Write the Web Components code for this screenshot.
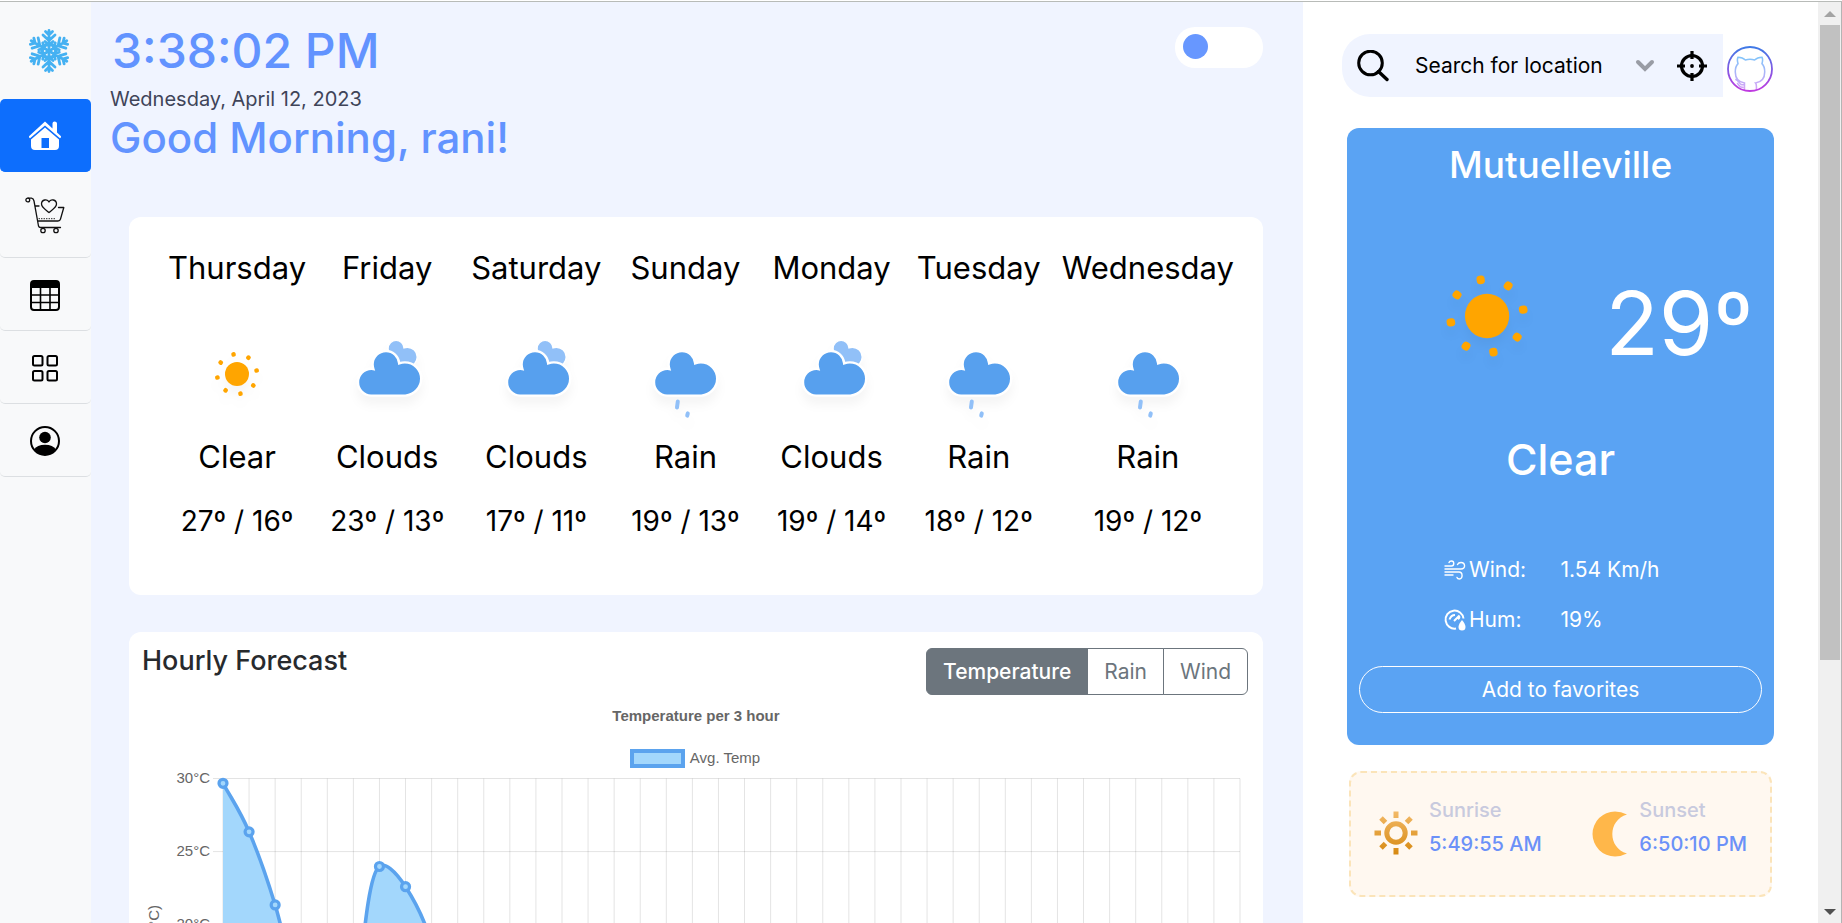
<!DOCTYPE html>
<html lang="en">
<head>
<meta charset="utf-8">
<title>Weather dashboard</title>
<style>
  body { margin: 0; background: #fff; font-family: Inter, "Open Sans", sans-serif; font-size: 20px; color: #000; }
</style>
</head>
<body>
<weather-app></weather-app>

<script>
function define(name, render) {
  customElements.define(name, class extends HTMLElement {
    connectedCallback() {
      if (this.shadowRoot) return;
      const t = document.createElement('template');
      t.innerHTML = render(this);
      this.attachShadow({ mode: 'open' }).append(t.content.cloneNode(true));
    }
  });
}

/* ---------- weather icons ---------- */
const CLOUD = 'M47.7,35.4c0-4.6-3.7-8.2-8.2-8.2c-1,0-1.9,0.2-2.8,0.5c-0.3-3.4-3.1-6.2-6.6-6.2c-3.7,0-6.7,3-6.7,6.7c0,0.8,0.2,1.6,0.4,2.3c-0.3-0.1-0.7-0.1-1-0.1c-3.7,0-6.7,3-6.7,6.7c0,3.6,2.9,6.6,6.5,6.7l17.2,0C44.2,43.3,47.7,39.8,47.7,35.4z';
const sunRays = [-10, 35, 80, 125, 170, 215, 260, 305]
  .map(a => `<rect x="-1.1" y="-11.1" width="2.2" height="2.3" rx="0.9" transform="rotate(${a})"/>`).join('');
const cloudPath = (fill, tr) => `<path d="${CLOUD}" fill="${fill}" stroke="#fff" stroke-width="1.2" transform="${tr}"/>`;
const WEATHER = {
  clear: `<g transform="translate(32,32)" fill="orange"><circle r="6"/>${sunRays}</g>`,
  clouds: cloudPath('#91C0F8', 'translate(18.5,2.3) scale(0.6)') + cloudPath('#57A0EE', 'translate(1.4,-1)'),
  rain: `<g stroke="#91C0F8" stroke-width="2" stroke-linecap="round"><path d="M28.4 45.7L28 48.7M33.4 51.7L33.1 52.8"/></g>` + cloudPath('#57A0EE', 'translate(.4,-1)')
};
define('weather-icon', el => `
  <style>
    :host { display: block; width: 128px; height: 128px; }
    :host([large]) { width: 242px; height: 242px; }
    svg { display: block; width: 100%; height: 100%; filter: drop-shadow(0 8px 5px rgba(0,0,0,.04)); }
  </style>
  <svg viewBox="0 0 64 64" aria-hidden="true">${WEATHER[el.getAttribute('kind')]}</svg>`);

/* ---------- interface icons ---------- */
const snowArms = [0, 60, 120, 180, 240, 300].map(a =>
  `<path transform="rotate(${a})" d="M0 0V-20.500M-3.500 -19.500L0 -16L3.500 -19.500M-6 -16L0 -10.500L6 -16M-4 -9.500L0 -6L4 -9.500M-3.500 -6L3.500 -6"/>`).join('');
const catPath = 'M-6 22V13C-12 12-16 8-16 1C-16-3-15-6-13-8C-14-11-14-13-13-15C-10-15-7-14-5-12C-2-13 2-13 5-12C7-14 10-15 13-15C14-13 14-11 13-8C15-6 16-3 16 1C16 8 12 12 6 13C7 14 7 15 7 17V22M-16 9C-12 10-12 14-9 15H-6M-14 13C-12 15-12 18-7 18';
const ICONS = {
  snow: [40, 46, `<g transform="translate(20,23)" fill="none" stroke="#45b1f2" stroke-width="2.8" stroke-linecap="round">${snowArms}</g>`],
  home: [34, 32, `<path fill="#fff" d="M17 1.500L24.500 8.500V3.500Q24.500 1.500 26.500 1.500Q29 1.500 29 3.500V12.500L33 16.200Q33.300 17.500 32 18.300L17 5.500L2 18.300Q.7 17.500 1 16.200Z"/><path fill="#fff" fill-rule="evenodd" d="M17 7.500L31 19.500V26Q31 30 27 30H7Q3 30 3 26V19.500ZM13.500 18V28H21V18Z"/>`],
  cart: [40, 37, `<g fill="none" stroke="#111" stroke-width="1.300" stroke-linecap="round" stroke-linejoin="round"><circle cx="2.800" cy="3" r="1.900"/><path d="M3 1.200H6.500Q8.500 1.500 9 4L13.500 29Q14 30.500 15.500 30.500H35.500M14 9H10M33.500 10.500H38.800L35.500 22Q35 24 33 24H13M24 15.500C21 13 16.500 10.500 16.500 7C16.500 2.500 22.500 1.500 24 5C25.500 1.500 31.500 2.500 31.500 7C31.500 10.500 27 13 24 15.500Z"/><circle cx="18" cy="33.500" r="2.200"/><circle cx="31" cy="33.500" r="2.200"/><path d="M14 21.700H31" stroke-width="1" stroke-dasharray=".5 2"/></g>`],
  table: [30, 31, `<rect x="1" y="1" width="28" height="29" rx="3" fill="none" stroke="#000" stroke-width="2"/><path d="M1 8V3Q1 1 3 1H27Q29 1 29 3V8Z"/><path stroke="#000" stroke-width="1.600" d="M1 15H29M1 22.500H29M10.500 7V30M20 7V30"/>`],
  grid: [26, 27, `<g fill="none" stroke="#000" stroke-width="2"><rect x="1" y="1" width="9.500" height="9.500" rx="1.500"/><rect x="15.500" y="1" width="9.500" height="9.500" rx="1.500"/><rect x="1" y="16" width="9.500" height="9.500" rx="1.500"/><rect x="15.500" y="16" width="9.500" height="9.500" rx="1.500"/></g>`],
  person: [30, 30, `<circle cx="15" cy="15" r="14" fill="none" stroke="#000" stroke-width="2"/><circle cx="15" cy="11.500" r="5.800"/><path d="M4 23.500Q7 18.800 15 18.800Q23 18.800 26 23.500Q21 29 15 29Q9 29 4 23.500Z"/>`],
  search: [32, 32, `<g fill="none" stroke="#000" stroke-width="3"><circle cx="13.500" cy="13" r="11.800"/><path d="M21.500 21.500L30 29.500" stroke-width="3.400" stroke-linecap="round"/></g>`],
  chevron: [20, 14, `<path d="M3 3L10 10L17 3" fill="none" stroke="#999ca5" stroke-width="4" stroke-linecap="round"/>`],
  target: [30, 30, `<g fill="none" stroke="#000" stroke-width="3.200"><circle cx="15" cy="15" r="10.500"/><path d="M15 0V8M15 22V30M0 15H8M22 15H30"/></g><circle cx="15" cy="15" r="1.900"/>`],
  github: [46, 46, `<defs><linearGradient id="g" x1="0" y1="0" x2="0" y2="1"><stop offset="0" stop-color="#3f7ae6"/><stop offset="1" stop-color="#c03ae0"/></linearGradient><linearGradient id="h" gradientUnits="userSpaceOnUse" x1="0" y1="-14" x2="0" y2="22"><stop offset="0" stop-color="#85c4fa"/><stop offset="1" stop-color="#dba2f6"/></linearGradient><clipPath id="k"><circle cx="23" cy="23" r="22"/></clipPath></defs><g clip-path="url(#k)"><path transform="translate(23,25) scale(.92)" d="${catPath}" fill="none" stroke="url(#h)" stroke-width="1.700"/></g><circle cx="23" cy="23" r="22" fill="none" stroke="url(#g)" stroke-width="1.800"/>`],
  wind: [22, 22, `<g fill="none" stroke="#fff" stroke-width="1.400" stroke-linecap="round"><path d="M1 7H7.500C10.500 7 10.500 2 7.500 2Q5.500 2 5 3.500M1 10H17C22 10 21.500 3.500 17 3.500Q14.500 3.500 13.500 5.500M1 13H15C19 13 19 20 15.500 20Q13.500 20 13 18.500M1 16H9"/></g>`],
  humidity: [22, 22, `<g fill="none" stroke="#fff" stroke-width="2"><path d="M12 19.500A9 9 0 1 1 19.500 9.500"/><path d="M5.500 10.500Q7 6 11 6M10 12L15.500 6.500M14 10Q16 9 15 7"/></g><path fill="#fff" d="M18 11Q21.500 15 21.500 18Q21.500 21.500 18 21.500Q14.500 21.500 14.500 18Q14.500 15 18 11Z"/>`],
  sun: [44, 44, `<defs><linearGradient id="s" gradientUnits="userSpaceOnUse" x1="0" y1="-22" x2="0" y2="22"><stop offset="0" stop-color="#f3ba68"/><stop offset="1" stop-color="#d6880f"/></linearGradient></defs><g transform="translate(22,22)"><circle r="9.200" fill="none" stroke="url(#s)" stroke-width="5"/><g stroke="url(#s)" stroke-width="5"><path d="M.01 -21.500L-.01 -15M.01 15L-.01 21.500M-21.500 .01L-15 -.01M15 .01L21.500 -.01M-15 -15L-10.500 -10.500M10.500 10.500L15 15M-15 15L-10.500 10.500M10.500 -10.500L15 -15"/></g></g>`],
  moon: [36, 46, `<path fill="#ffb74a" d="M35 3.500Q29 .5 23 .5A22.500 22.500 0 0 0 23 45.500Q29 45.500 35 42.500C15.500 37 15.500 9 35 3.500Z"/>`]
};
define('ui-icon', el => {
  const [w, h, body] = ICONS[el.getAttribute('name')];
  return `<style>:host { display: block; flex: none; } svg { display: block; }</style>
    <svg width="${w}" height="${h}" viewBox="0 0 ${w} ${h}" aria-hidden="true">${body}</svg>`;
});

/* ---------- sidebar ---------- */
define('nav-link', el => `
  <style>
    :host { display: block; }
    a { display: flex; align-items: center; justify-content: center; box-sizing: border-box; height: 73px; padding: 2px 2px 0 0;
        border-bottom: 1px solid #dcdfe2; border-radius: 5px; color: inherit; }
    :host([tall]) a { height: 86px; }
    :host([active]) a { background: #0d6efd; border-color: #0d6efd; }
  </style>
  <a href="#" aria-label="${el.getAttribute('label')}"><slot></slot></a>`);

define('app-sidebar', () => `
  <style>
    :host { display: block; background: #f8f9fa; }
    .logo { display: flex; align-items: center; justify-content: center; height: 97px; padding-left: 6px; }
  </style>
  <div class="logo"><ui-icon name="snow"></ui-icon></div>
  <nav>
    <nav-link label="Home" active><ui-icon name="home"></ui-icon></nav-link>
    <nav-link label="Favorites" tall><ui-icon name="cart"></ui-icon></nav-link>
    <nav-link label="Table"><ui-icon name="table"></ui-icon></nav-link>
    <nav-link label="Grid"><ui-icon name="grid"></ui-icon></nav-link>
    <nav-link label="Profile"><ui-icon name="person"></ui-icon></nav-link>
  </nav>`);

/* ---------- greeting header ---------- */
define('theme-switch', () => `
  <style>
    :host { display: block; }
    input { appearance: none; display: block; box-sizing: border-box; width: 88px; height: 41px; margin: 0;
            padding: 7px 8px; border-radius: 20px; background: #fff; }
    input::before { content: ""; display: block; width: 25px; height: 25px; border-radius: 50%; background: #6797ff; }
    input:checked::before { margin-left: auto; }
  </style>
  <input type="checkbox" role="switch" aria-label="Dark mode">`);

define('greeting-header', () => `
  <style>
    :host { display: flex; justify-content: space-between; align-items: flex-start; color: #6293ff; }
    .clock { margin: 0; padding-left: 2px; font-size: 48px; line-height: 60px; font-weight: 500; }
    .date { margin: 0; line-height: 36px; color: #3f4459; }
    h1 { margin: 0; font-size: 42px; line-height: 42px; font-weight: 500; }
    theme-switch { margin-top: 6px; }
  </style>
  <div>
    <p class="clock">3:38:02 PM</p>
    <p class="date">Wednesday, April 12, 2023</p>
    <h1>Good Morning, rani!</h1>
  </div>
  <theme-switch></theme-switch>`);

/* ---------- week forecast ---------- */
const WEEK = [
  ['Thursday', 'clear', 'Clear', '27º / 16º', 150], ['Friday', 'clouds', 'Clouds', '23º / 13º', 150],
  ['Saturday', 'clouds', 'Clouds', '17º / 11º', 148], ['Sunday', 'rain', 'Rain', '19º / 13º', 150],
  ['Monday', 'clouds', 'Clouds', '19º / 14º', 142], ['Tuesday', 'rain', 'Rain', '18º / 12º', 152],
  ['Wednesday', 'rain', 'Rain', '19º / 12º', 186]
];
define('week-forecast', () => `
  <style>
    :host { display: block; padding: 18px 22px 57px 33px; border-radius: 12px; background: #fff; }
    table { width: 100%; table-layout: fixed; border-collapse: collapse; font-size: 31px; text-align: center; }
    th, td { padding: 0; font-weight: 400; line-height: 38px; }
    th { line-height: 66px; }
    .icon { padding-top: 9px; }
    weather-icon { margin: 0 auto; }
    .range { padding-top: 28px; font-size: 28px; line-height: 34px; }
  </style>
  <table>
    <colgroup>${WEEK.map(d => `<col style="width:${d[4]}px">`).join('')}</colgroup>
    <thead><tr>${WEEK.map(d => `<th scope="col">${d[0]}</th>`).join('')}</tr></thead>
    <tbody>
      <tr>${WEEK.map(d => `<td class="icon"><weather-icon kind="${d[1]}"></weather-icon></td>`).join('')}</tr>
      <tr>${WEEK.map(d => `<td>${d[2]}</td>`).join('')}</tr>
      <tr>${WEEK.map(d => `<td class="range">${d[3]}</td>`).join('')}</tr>
    </tbody>
  </table>`);

/* ---------- hourly chart ---------- */
const X0 = 81, X1 = 1098, Y30 = 10.5, DEG = 14.62;
const gx = i => X0 + (X1 - X0) * i / 39;
const gy = t => Y30 + (30 - t) * DEG;
const TEMPS = [29.67, 26.35, 21.35, 15, 12.5, 13.5, 23.98, 22.6, 18.6, 13.6, 12.8];
function chartLine() {
  const p = TEMPS.map((t, i) => [gx(i), gy(t)]);
  return `M${p[0]}C${gx(.4)},${gy(28.4)} ${gx(.65)},${gy(27.8)} ${p[1]}C${gx(1.4)},${gy(24.7)} ${gx(1.65)},${gy(23.4)} ${p[2]}` +
    `C${gx(2.4)},${gy(19)} ${gx(2.6)},${gy(16.3)} ${p[3]}S${gx(3.7)},${gy(12.5)} ${p[4]}S${gx(4.8)},${gy(11.8)} ${p[5]}` +
    `C${gx(5.25)},${gy(15)} ${gx(5.45)},${gy(23.4)} ${p[6]}C${gx(6.2)},${gy(24.3)} ${gx(6.6)},${gy(23.7)} ${p[7]}` +
    `C${gx(7.4)},${gy(21.5)} ${gx(7.8)},${gy(20)} ${p[8]}S${gx(8.8)},${gy(14)} ${p[9]}S${gx(9.8)},${gy(12.8)} ${p[10]}`;
}
define('hourly-chart', () => {
  let grid = '';
  for (let i = 0; i < 40; i++) grid += `M${gx(i)} ${gy(30)}V${gy(15)}`;
  let rows = '', labels = '';
  for (let t = 30; t >= 20; t -= 5) {
    rows += `M${X0 - 10} ${gy(t)}H${X1}`;
    labels += `<text x="68" y="${Math.round(gy(t)) + 4}" text-anchor="end">${t}°C</text>`;
  }
  const line = chartLine();
  return `
  <style>
    :host { display: block; padding: 8px 15px 20px 13px; border-radius: 12px 12px 0 0; background: #fff; }
    header { display: flex; justify-content: space-between; align-items: flex-start; }
    h2 { margin: 0; font-size: 27px; line-height: 42px; font-weight: 500; color: #272a2e; }
    .group { display: flex; margin-top: 8px; }
    button { box-sizing: border-box; height: 47px; margin: 0 0 0 -1px; padding: 0 16px; border: 1px solid #6c757d; background: #fff;
             color: #6c757d; font: 400 21px/30px Inter, "Open Sans", sans-serif; }
    button:first-child { border-radius: 6px 0 0 6px; }
    button:last-child { border-radius: 0 6px 6px 0; }
    button[aria-pressed=true] { background: #6c757d; color: #fff; font-weight: 500; }
    figure { margin: 11px 0 0; font: 15px/20px "Liberation Sans", Arial, sans-serif; color: #666; }
    figcaption { padding-left: 2px; text-align: center; font-weight: 700; }
    .legend { display: flex; justify-content: center; align-items: center; gap: 5px; margin-top: 22px; }
    .legend i { box-sizing: border-box; width: 55px; height: 19px; border: 4px solid #5ba3ee; background: #a3d7fc; }
    svg { display: block; width: 100%; height: auto; }
    text { font-size: 15px; fill: #666; }
  </style>
  <header>
    <h2>Hourly Forecast</h2>
    <div class="group" role="group" aria-label="Chart data">
      <button type="button" aria-pressed="true">Temperature</button>
      <button type="button" aria-pressed="false">Rain</button>
      <button type="button" aria-pressed="false">Wind</button>
    </div>
  </header>
  <figure>
    <figcaption>Temperature per 3 hour</figcaption>
    <div class="legend"><i></i>Avg. Temp</div>
    <svg viewBox="0 0 1106 240" role="img" aria-label="Average temperature">
      <path d="${grid}${rows}" stroke="#000" stroke-opacity=".11" fill="none"/>
      <path d="${line}V${gy(5)}H${X0}Z" fill="#a3d7fc"/>
      <path d="${line}" fill="none" stroke="#5ba3ee" stroke-width="3.600"/>
      <g fill="#a3d7fc" stroke="#5ba3ee" stroke-width="3.200">${TEMPS.map((t, i) => `<circle cx="${gx(i)}" cy="${gy(t)}" r="4"/>`).join('')}</g>
      ${labels}
      <text transform="translate(17,137) rotate(-90)" text-anchor="end">(°C)</text>
    </svg>
  </figure>`;
});

/* ---------- right column ---------- */
define('location-search', () => `
  <style>
    :host { display: flex; align-items: flex-end; gap: 4px; }
    form { display: flex; align-items: center; flex: 1; min-width: 0; height: 63px; box-sizing: border-box; padding: 0 16px 0 15px;
           border-radius: 28px 0 0 28px; background: #f0f4ff; }
    input { flex: 1; min-width: 0; margin: 0 0 0 26px; padding: 0; border: 0; background: none; outline: 0;
            font: 21px/30px Inter, "Open Sans", sans-serif; color: #000; }
    input::placeholder { color: #000; opacity: 1; }
    button { margin: 0; padding: 0; border: 0; background: none; }
    .locate { margin-left: 22px; }
    a { display: block; padding-bottom: 5px; }
  </style>
  <form role="search">
    <ui-icon name="search"></ui-icon>
    <input type="text" aria-label="Search for location" placeholder="Search for location">
    <button type="button" aria-label="Open list"><ui-icon name="chevron"></ui-icon></button>
    <button type="button" class="locate" aria-label="Use my location"><ui-icon name="target"></ui-icon></button>
  </form>
  <a href="#" aria-label="GitHub"><ui-icon name="github"></ui-icon></a>`);

define('current-weather', () => `
  <style>
    :host { display: block; padding: 15px 12px 32px; border-radius: 12px; background: #5aa3f3; color: #fff; text-align: center; }
    h2 { margin: 0; font-size: 37px; line-height: 44px; font-weight: 500; }
    .now { display: flex; align-items: center; justify-content: space-between; margin-top: 8px; padding: 0 9px 0 10px; }
    .temp { margin: 0; padding-top: 14px; font-size: 88px; line-height: 100px; }
    .sky { margin: 0; font-size: 43px; line-height: 44px; font-weight: 500; }
    dl { display: grid; grid-template-columns: 1fr 1fr; margin: 64px 0 21px; font-size: 21px; line-height: 50px; text-align: left; }
    dt { display: flex; align-items: center; gap: 3px; padding-left: 85px; }
    dd { margin: 0; }
    button { display: block; box-sizing: border-box; width: 100%; height: 47px; padding: 0; border: 1px solid #fff; border-radius: 24px;
             background: none; color: #fff; font: 21px/30px Inter, "Open Sans", sans-serif; }
  </style>
  <h2>Mutuelleville</h2>
  <div class="now"><weather-icon kind="clear" large></weather-icon><p class="temp">29º</p></div>
  <p class="sky">Clear</p>
  <dl>
    <dt><ui-icon name="wind"></ui-icon>Wind:</dt><dd>1.54 Km/h</dd>
    <dt><ui-icon name="humidity"></ui-icon>Hum:</dt><dd>19%</dd>
  </dl>
  <button type="button">Add to favorites</button>`);

define('sun-time', el => `
  <style>
    :host { display: flex; gap: 11px; font-size: 20px; line-height: 34px; font-weight: 500; color: #6b91f8; }
    ui-icon { margin-top: 18px; }
    span { display: block; color: #c8cade; }
  </style>
  <ui-icon name="${el.getAttribute('icon')}"></ui-icon>
  <div><span>${el.getAttribute('label')}</span><slot></slot></div>`);

define('sun-times', () => `
  <style>
    :host { display: flex; justify-content: space-between; box-sizing: border-box; min-height: 126px; padding: 20px 23px 0;
            border: 2px dashed #fbe4b9; border-radius: 12px; background: #fff8f0; }
  </style>
  <sun-time icon="sun" label="Sunrise">5:49:55 AM</sun-time>
  <sun-time icon="moon" label="Sunset">6:50:10 PM</sun-time>`);

/* ---------- scroll bar ---------- */
define('page-scrollbar', () => `
  <style>
    :host { display: flex; flex-direction: column; box-sizing: border-box; padding: 0 1px 0 2px; border-right: 1px solid #b4b4b4; background: #f0f0f0; }
    .end { display: flex; align-items: center; justify-content: center; height: 23px; flex: none; }
    svg { display: block; }
    .thumb { flex: 635; background: #c1c1c1; }
    .rest { flex: 240; }
  </style>
  <div class="end"><svg width="12" height="6"><path d="M0 6L6 0L12 6Z" fill="#a3a3a3"/></svg></div>
  <div class="thumb"></div><div class="rest"></div>
  <div class="end"><svg width="12" height="6"><path d="M0 0H12L6 6Z" fill="#505050"/></svg></div>`);

/* ---------- page ---------- */
define('weather-app', () => `
  <style>
    :host { display: grid; grid-template-columns: 91px minmax(0, 1212fr) minmax(0, 515fr) 24px; grid-template-rows: minmax(0, 1fr);
            box-sizing: border-box; height: 100vh; padding-top: 1px; overflow: hidden;
            background: linear-gradient(#b8bbb8, #b8bbb8) 0 1px / 100% 1px no-repeat #fff; }
    app-sidebar, main, aside, page-scrollbar { margin-top: 1px; }
    main { overflow: hidden; padding: 19px 40px 0 38px; background: #f0f4ff; }
    greeting-header { margin-left: -19px; }
    week-forecast { margin-top: 58px; }
    hourly-chart { margin-top: 37px; }
    aside { overflow: hidden; padding: 32px 44px 0; background: #fff; }
    location-search { margin: 0 1px 0 -5px; }
    current-weather { margin-top: 31px; }
    sun-times { margin: 26px 2px 0; }
  </style>
  <app-sidebar></app-sidebar>
  <main>
    <greeting-header></greeting-header>
    <week-forecast></week-forecast>
    <hourly-chart></hourly-chart>
  </main>
  <aside>
    <location-search></location-search>
    <current-weather></current-weather>
    <sun-times></sun-times>
  </aside>
  <page-scrollbar aria-hidden="true"></page-scrollbar>`);
</script>
</body>
</html>
